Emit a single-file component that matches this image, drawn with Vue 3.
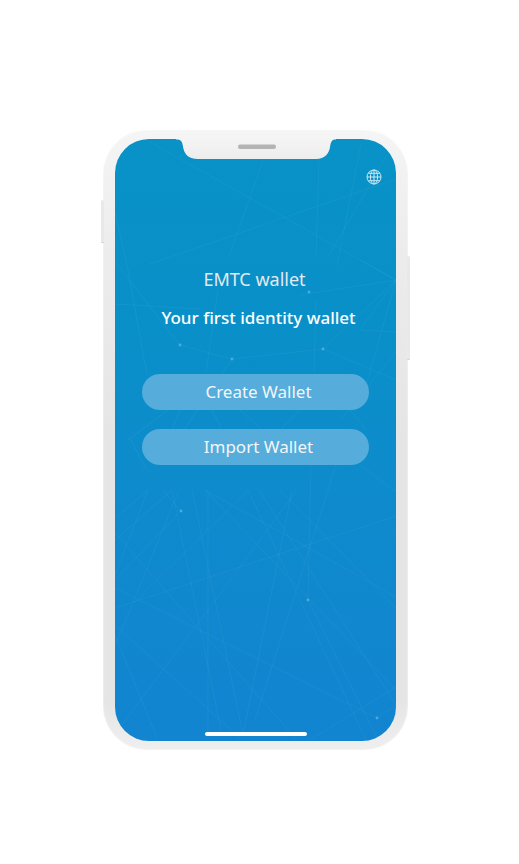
<script setup>
const lines = [
  [150, 142, 396, 280], [263, 160, 229, 257], [115, 212, 127, 265], [150, 264, 396, 179],
  [319, 160, 316, 257], [361, 144, 337, 265], [387, 155, 328, 257],
  [130, 281, 180, 345], [115, 262, 130, 281], [180, 345, 232, 359], [127, 265, 147, 375],
  [232, 359, 323, 349], [323, 349, 396, 280], [115, 304, 200, 309], [360, 260, 396, 280],
  [396, 280, 300, 295], [396, 280, 360, 330], [396, 280, 365, 390], [360, 330, 396, 332],
  [396, 352, 340, 420], [323, 349, 396, 380], [218, 290, 206, 372], [316, 300, 314, 372],
  [232, 359, 184, 430], [168, 410, 128, 440], [212, 410, 222, 430], [130, 438, 146, 469],
  [180, 410, 172, 430], [240, 410, 262, 430], [300, 410, 280, 430], [350, 410, 366, 430],
  [148, 490, 115, 518], [148, 490, 115, 575], [172, 490, 115, 540], [163, 490, 181, 511],
  [181, 511, 115, 580], [179, 490, 130, 610], [172, 490, 222, 735], [192, 490, 243, 735],
  [208, 490, 208, 735], [205, 490, 396, 597], [205, 490, 396, 690], [248, 490, 135, 602],
  [115, 533, 297, 740], [115, 588, 377, 718], [115, 608, 396, 516], [297, 490, 208, 610],
  [208, 610, 120, 727], [336, 465, 255, 720], [311, 465, 308, 600], [280, 490, 396, 608],
  [259, 490, 396, 705], [292, 490, 243, 735], [360, 465, 396, 492], [248, 490, 366, 740],
  [308, 600, 377, 738], [377, 718, 396, 705], [310, 740, 396, 687], [115, 625, 240, 738],
  [115, 635, 157, 738], [130, 610, 115, 645],
]
const dots = [[180, 345], [232, 359], [323, 349], [309, 292], [181, 511], [308, 600], [377, 718]]
</script>

<template>
  <main class="page">
    <div class="phone">
      <span class="key key-left"></span>
      <span class="key key-right"></span>
      <div class="screen">
        <svg class="mesh" viewBox="115 139 281 602" preserveAspectRatio="none" aria-hidden="true">
          <line v-for="(l, i) in lines" :key="i" :x1="l[0]" :y1="l[1]" :x2="l[2]" :y2="l[3]" />
          <circle v-for="(d, i) in dots" :key="'d' + i" :cx="d[0]" :cy="d[1]" r="1.4" />
        </svg>
        <svg class="notch" viewBox="0 0 160 21" aria-hidden="true">
          <defs>
            <linearGradient id="notchFill" x1="0" y1="0" x2="0" y2="1">
              <stop offset="0" stop-color="#f4f4f4" />
              <stop offset="1" stop-color="#ededed" />
            </linearGradient>
          </defs>
          <path fill="url(#notchFill)" d="M0 0V.6C5 .6 6 2.500 6.800 6.500C8 15 12 20 22 20H140C149 20 153.500 14 154.200 7C155 2.500 156 .6 160 .6V0Z" />
          <rect x="62" y="5.500" width="38" height="4.500" rx="2" fill="#b4b4b4" />
        </svg>
        <header class="bar">
          <button class="lang" type="button" aria-label="Language">
            <svg viewBox="0 0 16 16" width="16" height="16" aria-hidden="true">
              <circle cx="8" cy="8" r="7" />
              <ellipse cx="8" cy="8" rx="3.600" ry="7" />
              <path d="M8 1V15M1 8H15M2.300 4.300H13.700M2.300 11.700H13.700" />
            </svg>
          </button>
        </header>
        <section class="content">
          <h1>EMTC wallet</h1>
          <p>Your first identity wallet</p>
          <button class="action" type="button">Create Wallet</button>
          <button class="action" type="button">Import Wallet</button>
        </section>
        <span class="home"></span>
      </div>
    </div>
  </main>
</template>

<style>
body {
  margin: 0;
  background: #fff;
}
</style>

<style scoped>
.page {
  box-sizing: border-box;
  min-height: 100vh;
  padding: 16px 8px 0 0;
  display: flex;
  align-items: center;
  justify-content: center;
  font-family: "Noto Sans", "Open Sans", sans-serif;
}
.phone {
  position: relative;
  box-sizing: border-box;
  width: 100%;
  max-width: 305px;
  aspect-ratio: 305 / 620;
  padding: 9px 12px;
  display: flex;
  border-radius: 44px;
  background: linear-gradient(#f5f5f5, #ececec 20%, #e5e5e5 50%, #e5e5e5 92%, #efefef);
  box-shadow: inset 0 0 2px #fff;
}
.key {
  position: absolute;
  width: 3px;
  border-radius: 2px;
  background: #e9e9e9;
  border-bottom: 1px solid #cfcfcf;
}
.key-left {
  left: -2px;
  top: 70px;
  height: 42px;
}
.key-right {
  right: -2px;
  top: 126px;
  height: 103px;
}
.screen {
  position: relative;
  flex: 1;
  overflow: hidden;
  display: flex;
  flex-direction: column;
  align-items: center;
  border-radius: 34px;
  background: linear-gradient(#0892c6, #0a8fc9 35%, #0f8acd 65%, #1284d0);
  color: #fff;
}
.mesh {
  position: absolute;
  inset: 0;
  width: 100%;
  height: 100%;
}
.mesh line {
  stroke: #6fc4e8;
  stroke-opacity: 0.1;
}
.mesh circle {
  fill: #8fd4f2;
  fill-opacity: 0.45;
}
.notch {
  position: absolute;
  top: 0;
  left: 50%;
  width: 160px;
  margin-left: -80px;
}
.bar {
  position: relative;
  align-self: stretch;
  display: flex;
  justify-content: flex-end;
  padding: 30px 14px 0;
}
.lang {
  padding: 0;
  border: 0;
  background: none;
  display: flex;
}
.lang svg {
  fill: none;
  stroke: #c8e7f4;
  stroke-width: 1;
}
.content {
  position: relative;
  box-sizing: border-box;
  width: 100%;
  flex: 1;
  padding: 80px 27px 0;
  display: flex;
  flex-direction: column;
  text-align: center;
}
h1 {
  margin: 0;
  padding-right: 2px;
  font-size: 18px;
  line-height: 28px;
  font-weight: 400;
  color: #e4e9ee;
}
p {
  margin: 11px 0 42px;
  padding-left: 6px;
  font-size: 17px;
  line-height: 28px;
  font-weight: 500;
  white-space: nowrap;
}
.action {
  height: 36px;
  margin: 0 0 19px;
  padding: 0 0 0 6px;
  border: 0;
  border-radius: 18px;
  background: #56acda;
  color: #f2f6f9;
  font: inherit;
  font-size: 17px;
  line-height: 36px;
}
.home {
  position: relative;
  width: 102px;
  height: 4px;
  margin-bottom: 5px;
  border-radius: 2px;
  background: #fff;
}
</style>
